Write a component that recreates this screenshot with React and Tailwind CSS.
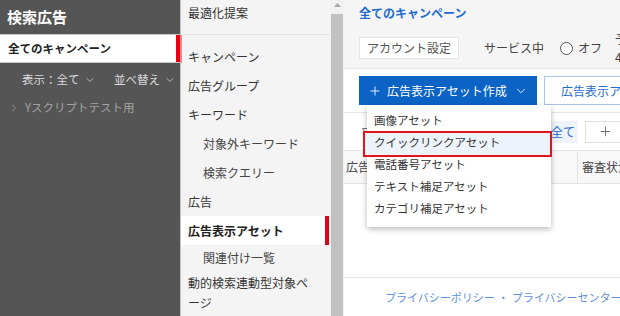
import { ChevronDown, ChevronRight, Plus } from "lucide-react";

const navItems = [
  { label: "キャンペーン" },
  { label: "広告グループ" },
  { label: "キーワード" },
  { label: "対象外キーワード", sub: true },
  { label: "検索クエリー", sub: true },
  { label: "広告" },
  { label: "広告表示アセット", active: true },
];

const menuItems = ["画像アセット", "クイックリンクアセット", "電話番号アセット", "テキスト補足アセット", "カテゴリ補足アセット"];

export default function App() {
  return (
    <div className="w-[620px] h-[316px] flex overflow-hidden bg-white font-['Noto_Sans_CJK_JP','Noto_Sans',sans-serif]">
      {/* left sidebar */}
      <aside className="w-[180px] shrink-0 bg-[#555555] flex flex-col">
        <div className="h-[34px] pl-[7px] flex items-center text-white font-bold text-[15px]">検索広告</div>
        <div className="h-[29px] flex bg-white border-y border-[#c9c9c9]">
          <div className="flex-1 pl-[8px] flex items-center text-[11.5px] font-bold text-[#222]">全てのキャンペーン</div>
          <div className="w-[4px] bg-[#e60012]"></div>
        </div>
        <div className="h-[34px] flex items-center text-[11.5px] text-[#dcdcdc]">
          <span className="ml-[22px] flex items-center gap-[4px]">
            表示：全て <ChevronDown size={12} strokeWidth={1.5} />
          </span>
          <span className="ml-auto mr-[4px] flex items-center gap-[4px]">
            並べ替え <ChevronDown size={12} strokeWidth={1.5} />
          </span>
        </div>
        <div className="h-[22px] flex items-center pl-[8px] gap-[5px] text-[11.5px] text-[#a3a3a3]">
          <ChevronRight size={12} strokeWidth={1.5} />
          Yスクリプトテスト用
        </div>
      </aside>

      {/* sub navigation */}
      <nav className="relative w-[150px] shrink-0 bg-[#f4f4f4] border-l border-[#c4c4c4] flex flex-col text-[12px] text-[#333]">
        <div className="h-[35px] border-b border-[#e2e2e2] pl-[7px] pt-[4px] leading-[18px]">最適化提案</div>
        <div className="absolute left-[-1px] top-[35px] w-[2px] h-[28px] bg-[#e98a90]"></div>
        <div className="pt-[7px] flex flex-col">
          {navItems.map((item) => (
            <div
              key={item.label}
              className={
                item.active
                  ? "h-[29px] flex mr-[1px] bg-white font-bold text-[#222]"
                  : "h-[29px] flex"
              }
            >
              <span className={item.sub ? "flex-1 flex items-center pl-[22px] text-[#444]" : "flex-1 flex items-center pl-[7px]"}>
                {item.label}
              </span>
              {item.active && <span className="w-[4px] bg-[#e60012]"></span>}
            </div>
          ))}
          <div className="h-[26px] flex items-center pl-[22px] text-[#444]">関連付け一覧</div>
          <div className="pl-[7px] pr-[10px] pt-[2px] leading-[20px]">動的検索連動型対象ページ</div>
        </div>
      </nav>

      {/* scrollbar */}
      <div className="w-[14px] shrink-0 bg-[#f1f1f1] flex flex-col px-[1px]">
        <div className="h-[14px] flex items-start justify-center pt-[3px]">
          <svg width="7" height="4" viewBox="0 0 7 4">
            <path d="M3.5 0 L7 4 L0 4 Z" fill="#a6a6a6" />
          </svg>
        </div>
        <div className="flex-1 bg-[#c1c1c1]"></div>
      </div>

      {/* main */}
      <main className="relative flex-1 min-w-0 flex flex-col overflow-hidden">
        <div className="h-[69px] shrink-0 bg-[#f5f5f5] border-b border-[#e6e6e6] pl-[15px] flex flex-col">
          <div className="h-[26px] flex items-center text-[12px] font-bold text-[#1f6ccf]">全てのキャンペーン</div>
          <div className="mt-[4px] flex items-center whitespace-nowrap text-[12px] text-[#444]">
            <span className="h-[22px] px-[7px] shrink-0 flex items-center bg-white border border-[#e4e4e4] text-[#555]">アカウント設定</span>
            <span className="ml-[25px] shrink-0">サービス中</span>
            <span className="ml-[16px] w-[13px] h-[13px] shrink-0 rounded-full border border-[#555] bg-white"></span>
            <span className="ml-[5px] shrink-0">オフ</span>
            <span className="ml-[13px] flex flex-col leading-[18px] shrink-0">
              <span>予算</span>
              <span>4,000円</span>
            </span>
          </div>
        </div>

        <div className="h-[44px] shrink-0 border-b border-[#e6e6e6] pl-[15px] pt-[7px] flex items-start gap-[7px] whitespace-nowrap">
          <div className="w-[178px] h-[29px] shrink-0 bg-[#0b63c5] text-white text-[12px] flex items-center justify-center gap-[5px]">
            <Plus size={14} strokeWidth={1.5} />
            <span>広告表示アセット作成</span>
            <ChevronDown size={14} strokeWidth={1.5} className="ml-[2px]" />
          </div>
          <div className="h-[29px] shrink-0 border border-[#a9c6ea] bg-white text-[#1f6ccf] text-[12px] flex items-center px-[16px]">
            広告表示アセット一括操作
          </div>
        </div>

        <div className="h-[37px] shrink-0 flex items-center pl-[15px] whitespace-nowrap">
          <svg width="8" height="8" viewBox="0 0 8 8" className="ml-[3px] shrink-0">
            <path d="M0.5 0.5 H7.5 L4.8 4 V7.5 L3.2 6.5 V4 Z" fill="none" stroke="#777" strokeWidth="1" />
          </svg>
          <span className="ml-[178px] h-[22px] px-[3px] shrink-0 flex items-center bg-[#eef3fa] text-[#1f6ccf] text-[12px]">全て</span>
          <span className="ml-[7px] w-[40px] h-[22px] shrink-0 border border-[#dedede] flex items-center justify-center text-[#555]">
            <Plus size={15} strokeWidth={1.3} />
          </span>
        </div>

        <div className="h-[34px] shrink-0 flex items-stretch bg-[#f8f8f8] border-y border-[#e4e4e4] text-[12px] text-[#444] whitespace-nowrap">
          <span className="w-[234px] shrink-0 pl-[2px] flex items-center border-r border-[#e4e4e4]">広告表示アセット</span>
          <span className="pl-[4px] flex items-center">審査状況</span>
        </div>

        <div className="flex-1"></div>

        <div className="h-[39px] shrink-0 border-t border-[#e6e6e6] pl-[41px] flex items-center gap-[3px] text-[11px] text-[#5f90d8] whitespace-nowrap">
          <span>プライバシーポリシー</span>
          <span>・</span>
          <span>プライバシーセンター</span>
        </div>

        {/* dropdown menu */}
        <div className="absolute left-[23px] top-[105px] w-[184px] pt-[5px] pb-[7px] bg-white shadow-[0_2px_6px_rgba(0,0,0,0.28)] text-[11.5px] text-[#333]">
          {menuItems.map((m, i) => (
            <div key={m} className="relative h-[22px] flex items-center pl-[7px]">
              {i === 1 && (
                <span className="absolute -left-[4px] -right-[1px] -top-[1px] -bottom-[3px] border-2 border-[#e3141e] bg-[#edf3fb]"></span>
              )}
              <span className="relative">{m}</span>
            </div>
          ))}
        </div>
      </main>
    </div>
  );
}
